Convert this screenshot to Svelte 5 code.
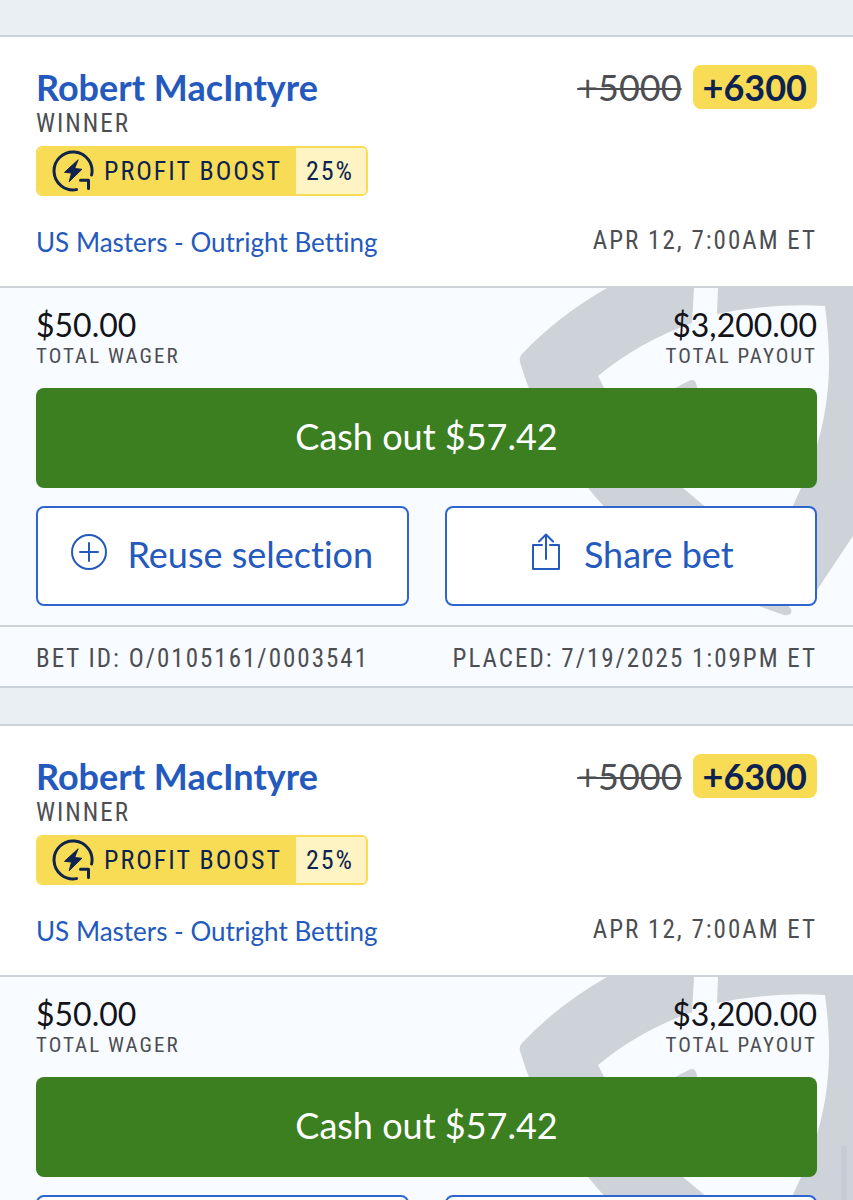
<script>
    const bets = [
        {
            player: 'Robert MacIntyre',
            market: 'Winner',
            oldOdds: '+5000',
            odds: '+6300',
            boost: '25%',
            event: 'US Masters - Outright Betting',
            date: 'Apr 12, 7:00AM ET',
            wager: '$50.00',
            payout: '$3,200.00',
            cashOut: '$57.42',
            id: 'O/0105161/0003541',
            placed: '7/19/2025 1:09PM ET'
        },
        {
            player: 'Robert MacIntyre',
            market: 'Winner',
            oldOdds: '+5000',
            odds: '+6300',
            boost: '25%',
            event: 'US Masters - Outright Betting',
            date: 'Apr 12, 7:00AM ET',
            wager: '$50.00',
            payout: '$3,200.00',
            cashOut: '$57.42',
            id: 'O/0105161/0003541',
            placed: '7/19/2025 1:09PM ET'
        }
    ];
</script>

<main class="bets">
    {#each bets as bet}
        <article class="card">
            <header class="selection">
                <div class="row">
                    <a class="player" href="#player">{bet.player}</a>
                    <div class="odds">
                        <s class="old-odds">{bet.oldOdds}</s>
                        <strong class="new-odds">{bet.odds}</strong>
                    </div>
                </div>
                <div class="label">{bet.market}</div>
                <div class="boost">
                    <div class="boost-name">
                        <svg class="boost-icon" viewBox="0 0 42 42" aria-hidden="true">
                            <path d="M39.6 25A19 19 0 1 0 24.5 39.6M28.5 30.3H36.5V38.6" />
                            <path class="bolt" d="M25.9 10 12.5 22.3l7 .8-2.3 8.6 12.7-12.4-7-.7z" />
                        </svg>
                        <span>Profit Boost</span>
                    </div>
                    <div class="boost-value">{bet.boost}</div>
                </div>
                <div class="row event-row">
                    <a class="event" href="#event">{bet.event}</a>
                    <time class="label">{bet.date}</time>
                </div>
            </header>

            <section class="summary">
                <!-- shield watermark -->
                <svg class="shield" viewBox="0 0 353 337" aria-hidden="true">
                    <path d="M107 0Q58 28 22 66Q19 69 20 74Q41 145 88 200Q155 283 256 317L284 327Q293 328 291 321Q289 317 284 314Q320 300 317 302L353 248V0H218L217 26Q270 15 325 18C335 92 326 144 301 200Q285 237 268 265Q227 238 183 200Q130 155 98 88Q139 54 192 35L194 0Z" />
                    <path d="M150 117Q171 101 191 92Q196 91 197 99L196 150H165Z" />
                </svg>
                <div class="row">
                    <div class="amount">
                        <span class="money">{bet.wager}</span>
                        <span class="caption">Total wager</span>
                    </div>
                    <div class="amount end">
                        <span class="money">{bet.payout}</span>
                        <span class="caption">Total payout</span>
                    </div>
                </div>
                <button class="cash-out" type="button">Cash out {bet.cashOut}</button>
                <div class="actions">
                    <button class="action" type="button">
                        <svg class="icon" viewBox="0 0 36 38" aria-hidden="true">
                            <circle cx="18" cy="19" r="17" />
                            <path d="M18 10v18M9 19h18" />
                        </svg>
                        <span>Reuse selection</span>
                    </button>
                    <button class="action" type="button">
                        <svg class="icon" viewBox="0 0 36 38" aria-hidden="true">
                            <path d="M14 12H5V36H31V12H22M18 26V2M11 8.500 18 1.500 25 8.500" />
                        </svg>
                        <span>Share bet</span>
                    </button>
                </div>
            </section>

            <footer class="row receipt">
                <span class="label">Bet ID: {bet.id}</span>
                <span class="label">Placed: {bet.placed}</span>
            </footer>
        </article>
    {/each}
</main>
<div class="scroll-thumb"></div>

<style>
    :global(body) {
        margin: 0;
        background: #eaeff4;
    }
    .bets {
        display: flex;
        flex-direction: column;
        gap: 36px;
        padding: 35px 0;
        font-family: Lato, sans-serif;
        font-variant-ligatures: none;
        color: #131419;
    }
    .card {
        border-top: 2px solid #ccd2da;
        border-bottom: 2px solid #ccd2da;
        background: #f8fbff;
    }
    .row {
        display: flex;
        justify-content: space-between;
    }
    a {
        color: #2459bd;
        text-decoration: none;
    }
    .label,
    .caption,
    .boost {
        font-family: 'Roboto Condensed', 'Liberation Sans Narrow', sans-serif;
        text-transform: uppercase;
        letter-spacing: 2px;
        color: #4c4e52;
    }
    .label {
        font-size: 25px;
        line-height: 30px;
    }
    .caption {
        font-size: 21px;
        line-height: 28px;
    }

    .selection {
        padding: 28px 36px;
        background: #fff;
        border-bottom: 2px solid #ced2d9;
    }
    .player {
        font-size: 36px;
        line-height: 44px;
        font-weight: 700;
    }
    .odds {
        display: flex;
        gap: 11px;
        font-size: 36px;
        line-height: 44px;
    }
    .old-odds {
        color: #4c4e52;
        text-decoration-thickness: 2px;
    }
    .new-odds {
        padding: 0 10px;
        border-radius: 8px;
        background: #f9dc55;
        color: #0c2250;
    }
    .boost {
        display: flex;
        width: fit-content;
        margin-top: 7px;
        border: 2px solid #f9dc55;
        border-radius: 6px;
        overflow: hidden;
        font-size: 26px;
        line-height: 46px;
        color: #0c2250;
    }
    .boost-name {
        display: flex;
        align-items: center;
        gap: 10px;
        padding: 0 14px;
        background: #f9dc55;
    }
    .boost-icon {
        width: 42px;
        height: 42px;
        fill: none;
        stroke: #10234a;
        stroke-width: 3;
        stroke-linecap: round;
        stroke-linejoin: round;
    }
    .bolt {
        fill: #0c2250;
        stroke-width: 1;
    }
    .boost-value {
        padding: 0 12px 0 10px;
        background: #fdf3c3;
    }
    .event-row {
        margin-top: 30px;
    }
    .event {
        font-size: 26px;
        line-height: 32px;
    }

    .summary {
        position: relative;
        display: flex;
        flex-direction: column;
        gap: 18px;
        padding: 20px 36px 19px;
        border-bottom: 2px solid #ced2d9;
        overflow: hidden;
    }
    .summary > * {
        position: relative;
    }
    .summary > .shield {
        position: absolute;
        top: 0;
        right: 0;
        width: 353px;
        height: 337px;
        fill: #ced2d9;
    }
    .amount {
        display: flex;
        flex-direction: column;
    }
    .end {
        text-align: right;
    }
    .money {
        font-size: 32px;
        line-height: 34px;
    }
    button {
        height: 100px;
        padding: 0 0 4px;
        border-radius: 8px;
        font-family: inherit;
        font-size: 36px;
        font-variant-ligatures: none;
        cursor: pointer;
    }
    .cash-out {
        border: 0;
        background: #3b7f21;
        color: #fff;
    }
    .actions {
        display: grid;
        grid-template-columns: 1fr 1fr;
        gap: 36px;
    }
    .action {
        display: flex;
        align-items: center;
        justify-content: center;
        gap: 20px;
        border: 2px solid #2e66cf;
        background: #fff;
        color: #2459bd;
    }
    .icon {
        width: 36px;
        height: 38px;
        margin-bottom: 4px;
        fill: none;
        stroke: #2459bd;
        stroke-width: 2;
        stroke-linecap: round;
        stroke-linejoin: round;
    }
    .receipt {
        padding: 17px 36px 12px;
    }

    .scroll-thumb {
        position: fixed;
        right: 6px;
        bottom: 0;
        width: 6px;
        height: 55px;
        border-radius: 3px 3px 0 0;
        background: rgba(160, 168, 185, 0.15);
    }
</style>
